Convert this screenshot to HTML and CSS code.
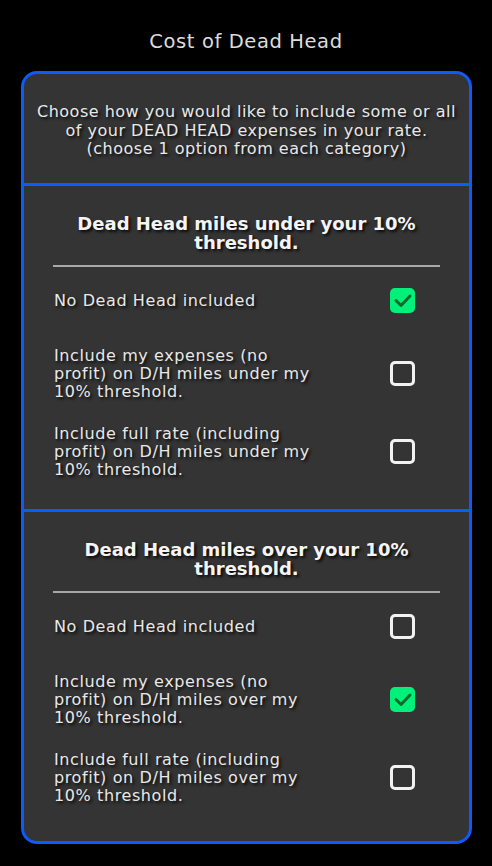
FILE: index.html
```html
<!DOCTYPE html>
<html lang="en">
<head>
<meta charset="utf-8">
<title>Cost of Dead Head</title>
<link rel="stylesheet" href="styles.css">
</head>
<body>
<h1 class="page-title">Cost of Dead Head</h1>
<div class="card">
  <div class="intro">
    <p>Choose how you would like to include some or all<br>of your DEAD HEAD expenses in your rate.<br>(choose 1 option from each category)</p>
  </div>
  <div class="section">
    <h2 class="section-title">Dead Head miles under your 10%<br>threshold.</h2>
    <div class="rule"></div>
    <div class="option">
      <span class="option-text">No Dead Head included</span>
      <span class="box checked"><svg viewBox="0 0 25 25" width="25" height="25"><path d="M6 12.5 L11 17.5 L20 8" fill="none" stroke="#0a6a2c" stroke-width="3" stroke-linecap="round" stroke-linejoin="round"/></svg></span>
    </div>
    <div class="option">
      <span class="option-text">Include my expenses (no<br>profit) on D/H miles under my<br>10% threshold.</span>
      <span class="box"></span>
    </div>
    <div class="option">
      <span class="option-text">Include full rate (including<br>profit) on D/H miles under my<br>10% threshold.</span>
      <span class="box"></span>
    </div>
  </div>
  <div class="section last">
    <h2 class="section-title">Dead Head miles over your 10%<br>threshold.</h2>
    <div class="rule"></div>
    <div class="option">
      <span class="option-text">No Dead Head included</span>
      <span class="box"></span>
    </div>
    <div class="option">
      <span class="option-text">Include my expenses (no<br>profit) on D/H miles over my<br>10% threshold.</span>
      <span class="box checked"><svg viewBox="0 0 25 25" width="25" height="25"><path d="M6 12.5 L11 17.5 L20 8" fill="none" stroke="#0a6a2c" stroke-width="3" stroke-linecap="round" stroke-linejoin="round"/></svg></span>
    </div>
    <div class="option">
      <span class="option-text">Include full rate (including<br>profit) on D/H miles over my<br>10% threshold.</span>
      <span class="box"></span>
    </div>
  </div>
</div>
</body>
</html>
```

FILE: styles.css
```css
* { box-sizing: border-box; }

html, body {
  margin: 0;
  padding: 0;
  background: #000;
}

body {
  width: 492px;
  height: 866px;
  font-family: "DejaVu Sans", "Liberation Sans", sans-serif;
  color: #e8e8e8;
}

.page-title {
  margin: 0;
  padding-top: 30px;
  height: 71px;
  font-size: 19.5px;
  line-height: 24px;
  font-weight: normal;
  letter-spacing: 0.6px;
  text-align: center;
  color: #dcdcdc;
}

.card {
  margin: 0 20px 0 21px;
  width: 451px;
  border: 3px solid #0b5cfb;
  border-radius: 16px;
  background: #343434;
  overflow: hidden;
}

.intro {
  padding: 29px 8px 24px;
  border-bottom: 3px solid #0b5cfb;
  text-align: center;
}

.intro p {
  margin: 0;
  font-size: 16px;
  line-height: 18.5px;
  letter-spacing: 0.5px;
  text-shadow: 2px 2px 3px rgba(0, 0, 0, 0.85);
}

.section {
  padding: 28px 29px 18px;
  border-bottom: 3px solid #0b5cfb;
}

.section.last {
  border-bottom: none;
  padding-bottom: 24px;
}

.section-title {
  margin: 0 0 12px;
  font-size: 18px;
  line-height: 19.5px;
  font-weight: bold;
  text-align: center;
  color: #f4f4f4;
  text-shadow: 2px 2px 3px rgba(0, 0, 0, 0.85);
}

.rule {
  height: 2px;
  background: #a8a8a8;
}

.option {
  display: flex;
  align-items: center;
  justify-content: space-between;
  min-height: 68px;
  padding: 12px 25px 12px 1px;
}

.option-text {
  font-size: 16px;
  line-height: 18px;
  letter-spacing: 0.6px;
  text-shadow: 2px 2px 3px rgba(0, 0, 0, 0.85);
}

.box {
  flex: none;
  width: 25px;
  height: 25px;
  border: 3px solid #f2f2f2;
  border-radius: 5px;
}

.box.checked {
  border: none;
  background: #00f07a;
}

.box svg {
  display: block;
}
```
